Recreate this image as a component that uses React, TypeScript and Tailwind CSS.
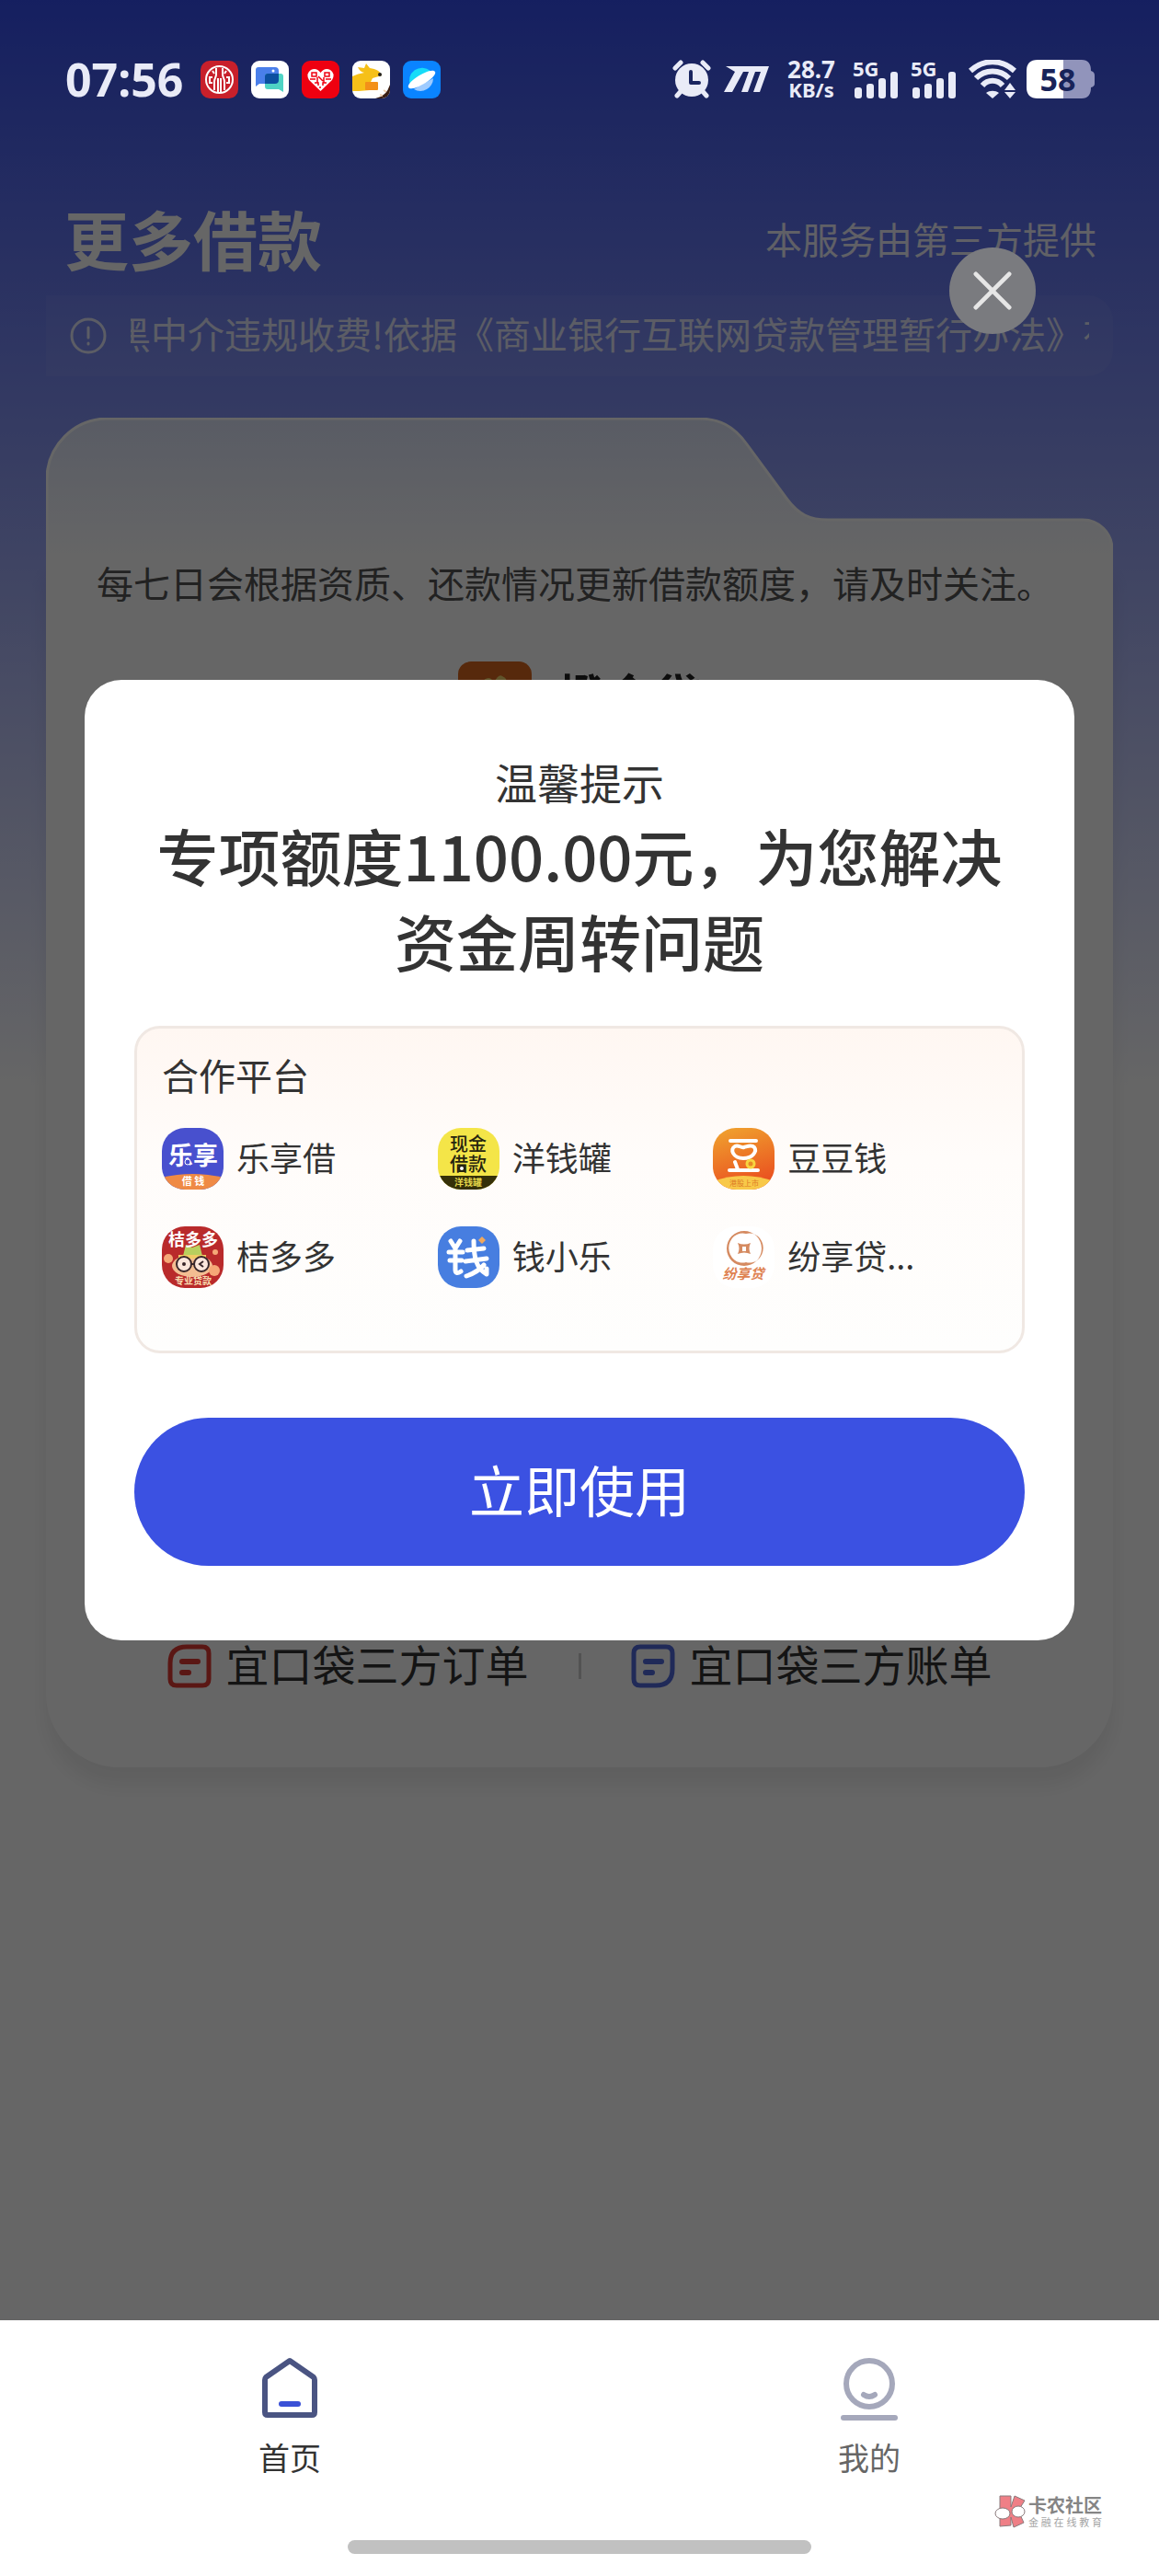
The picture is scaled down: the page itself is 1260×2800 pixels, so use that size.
import type { ReactNode } from "react"

const Alarm = () => (
    <svg viewBox="0 0 42 42" className="w-[42px] h-[42px]" aria-hidden="true">
        <g stroke="#e9ebf7" strokeWidth="5" strokeLinecap="round">
            <path d="M3 9L9 3M39 9L33 3M5 39l7-8M37 39l-7-8" />
        </g>
        <circle cx="21" cy="22" r="18" fill="#e9ebf7" />
        <path d="M20 13v12h9" fill="none" stroke="#1a2560" strokeWidth="4" strokeLinejoin="round" strokeLinecap="round" />
    </svg>
)

const CarrierMark = () => (
    <svg viewBox="0 0 50 30" className="w-[50px] h-[30px]" aria-hidden="true">
        <path d="M2 1H49L39 29H32L40 7H34L26 29H19L27 7H21L9 29H0L12 7Z" fill="#e9ebf7" />
    </svg>
)

const Signal = () => (
    <div className="relative w-[50px] h-[42px]">
        <span className="absolute left-0 top-0 text-[22px] leading-[18px] font-bold">5G</span>
        <svg viewBox="0 0 50 42" className="w-full h-full" aria-hidden="true">
            <g fill="#e9ebf7">
                <rect x="2" y="30" width="8" height="12" rx="3" />
                <rect x="15" y="26" width="8" height="16" rx="3" />
                <rect x="28" y="20" width="8" height="22" rx="3" />
                <rect x="41" y="13" width="8" height="29" rx="3" />
            </g>
        </svg>
    </div>
)

const Wifi = () => (
    <svg viewBox="0 0 52 42" className="w-[52px] h-[42px]" aria-hidden="true">
        <g fill="none" stroke="#e9ebf7" strokeWidth="6">
            <path d="M2 12C16 -1 36 -1 50 12" />
            <path d="M8 20C18 10 34 10 44 20" />
            <path d="M15 28C21 21 31 21 37 28" />
        </g>
        <path d="M19 36c4-3 10-3 14 0l-7 6z" fill="#e9ebf7" />
        <path d="M39 33l6-8 6 8zM39 35h12l-6 7z" fill="#e9ebf7" />
    </svg>
)

const Battery = () => (
    <div className="relative w-[74px] h-[42px]">
        <svg viewBox="0 0 74 42" className="w-full h-full" aria-hidden="true">
            <path d="M40 0H60Q70 0 70 12Q74 13 74 17V26Q74 29 70 30Q70 42 60 42H40Z" fill="#9194bb" />
            <path d="M12 0H40V42H12Q0 42 0 30V12Q0 0 12 0Z" fill="#fff" />
        </svg>
        <span className="absolute left-0 top-0 w-[68px] h-[42px] text-center text-[34px] leading-[42px] font-bold text-[#182359]">58</span>
    </div>
)

const trayIcons: ReactNode[] = [
    <svg key="bank" viewBox="0 0 41 41" className="w-[41px] h-[41px]">
        <rect width="41" height="41" rx="10" fill="#c8202b" />
        <circle cx="20.500" cy="20.500" r="14.500" fill="none" stroke="#fff" strokeWidth="2" />
        <path d="M17 8v7c0 3-2 4-2 8v9M24 8v7c0 3 2 4 2 8v9M19 19v15M22 19v15M13 11l2 3M28 11l-2 3" fill="none" stroke="#fff" strokeWidth="2" />
        <path d="M13 18h-3v6h3M28 18h3v6h-3" fill="none" stroke="#fff" strokeWidth="2" />
    </svg>,
    <svg key="chat" viewBox="0 0 41 41" className="w-[41px] h-[41px]">
        <rect width="41" height="41" rx="9" fill="#fff" />
        <path d="M8 7h18q4 0 4 4v14H9l-4 3V10q0-3 3-3z" fill="#4a7fea" />
        <path d="M18 14h14q3 0 3 3v17l-5-3H18q-3 0-3-3V17q0-3 3-3z" fill="#4fd3c4" />
        <path d="M18 14h12v7q0 4-4 4H15v-8q0-3 3-3z" fill="#0c4fa0" />
        <circle cx="24" cy="11" r="1.500" fill="#fff" />
    </svg>,
    <svg key="heart" viewBox="0 0 41 41" className="w-[41px] h-[41px]">
        <rect width="41" height="41" rx="9" fill="#ee0010" />
        <path d="M20.500 33L8 21q-4-7 2-11 6-3 10.500 3 4.500-6 10.500-3 6 4 2 11z" fill="#fff" />
        <path d="M11 13h5v4h-5zM25 13h5v4h-5zM9 20h6M26 20h6M14 24h4v3M23 27v-3h4M17 18v6M24 18v6M18 17l5 5M20 28v2" fill="none" stroke="#ee0010" strokeWidth="1.500" />
    </svg>,
    <svg key="kangaroo" viewBox="0 0 41 41" className="w-[41px] h-[41px]">
        <clipPath id="tray-clip">
            <rect width="41" height="41" rx="9" />
        </clipPath>
        <g clipPath="url(#tray-clip)">
            <rect width="41" height="41" fill="#fff" />
            <path d="M6 7l7 1 2-5 4 5c7 1 11 3 13 8l-10 3-2 4-4 3 3 6-12 1H0V17q6-3 13-4-5-1-7-6z" fill="#f6c019" />
            <rect x="14" y="23" width="14" height="9" rx="1" fill="#f39019" />
            <path d="M41 26v15H25q12-2 16-15z" fill="#3a1d12" />
            <path d="M30 37l3 1M34 32l3 2" stroke="#f0d0b0" strokeWidth="2" />
            <circle cx="30" cy="15" r="2" fill="#222" />
        </g>
    </svg>,
    <svg key="planet" viewBox="0 0 41 41" className="w-[41px] h-[41px]">
        <rect width="41" height="41" rx="9" fill="#0a84ff" />
        <path d="M8 27A14 14 0 0 1 30 11z" fill="#16dcf8" />
        <path d="M33 19A14 14 0 0 1 12 31z" fill="#9ecbff" />
        <path d="M6 29C3 23 31 6 35 12 38 18 10 35 6 29z" fill="#fff" />
    </svg>,
]

const PlatformTile = ({ id, children }: { id: string; children: ReactNode }) => (
    <svg viewBox="0 0 67 67" className="w-[67px] h-[67px] shrink-0" aria-hidden="true">
        <defs>
            <clipPath id={id}>
                <rect width="67" height="67" rx="25" />
            </clipPath>
            <linearGradient id={`${id}-orange`} x1="0" y1="0" x2="0.3" y2="1">
                <stop offset="0" stopColor="#f0a52f" />
                <stop offset="1" stopColor="#ea5320" />
            </linearGradient>
        </defs>
        <g clipPath={`url(#${id})`} textAnchor="middle">{children}</g>
    </svg>
)

const platforms = [
    {
        name: "乐享借",
        logo: (
            <PlatformTile id="lexiang">
                <rect width="67" height="67" fill="#4850ce" />
                <text x="34" y="40" fontSize="27" fontWeight="700" fill="#fff">乐享</text>
                <circle cx="28" cy="37" r="3" fill="#4850ce" stroke="#fff" />
                <path d="M0 54Q33 46 67 54V67H0z" fill="#ef8a45" />
                <text x="34" y="62" fontSize="11" fontWeight="700" fill="#fff">借 钱</text>
            </PlatformTile>
        ),
    },
    {
        name: "洋钱罐",
        logo: (
            <PlatformTile id="yangqianguan">
                <rect width="67" height="67" fill="#f4e548" />
                <text x="33" y="25" fontSize="20" fontWeight="500" fill="#26240f">现金</text>
                <text x="33" y="47" fontSize="20" fontWeight="500" fill="#26240f">借款</text>
                <circle cx="26" cy="44" r="3" fill="#fff" stroke="#26240f" strokeWidth="2" />
                <rect y="52" width="67" height="15" fill="#353009" />
                <text x="33" y="63" fontSize="10" fontWeight="700" fill="#e5d84b">洋钱罐</text>
            </PlatformTile>
        ),
    },
    {
        name: "豆豆钱",
        logo: (
            <PlatformTile id="doudou">
                <rect width="67" height="67" fill="url(#doudou-orange)" />
                <g fill="none" stroke="#fff" strokeWidth="4" strokeLinecap="round">
                    <path d="M19 14H47M18 46H49M24 37l3 8" />
                    <path d="M24 20c4-2 6 2 10 1s8-3 11 0c3 4-1 12-12 12S18 23 24 20z" />
                </g>
                <circle cx="41" cy="39" r="4" fill="#e98a26" stroke="#f7d53f" strokeWidth="3" />
                <path d="M0 58Q33 46 67 58V67H0z" fill="#f8c949" />
                <text x="34" y="63" fontSize="8" fill="#dd7a25">港股上市</text>
            </PlatformTile>
        ),
    },
    {
        name: "桔多多",
        logo: (
            <PlatformTile id="juduoduo">
                <rect width="67" height="67" fill="#b92a2b" />
                <ellipse cx="33" cy="43" rx="22" ry="12" fill="#f3bd92" />
                <path d="M23 32l3-12 7 3 8-3 3 12z" fill="#b9cf5e" />
                <path d="M18 31h30v4H18z" fill="#f1cb65" />
                <g fill="#f5a877">
                    <circle cx="7" cy="35" r="5" />
                    <circle cx="57" cy="48" r="6" />
                    <circle cx="58" cy="28" r="3" />
                </g>
                <g fill="#fbe6dc" stroke="#38262a" strokeWidth="2">
                    <circle cx="24" cy="41" r="8" />
                    <circle cx="43" cy="41" r="8" />
                </g>
                <path d="M32 41h3M45 38l-4 3 4 3" fill="none" stroke="#38262a" strokeWidth="2" />
                <circle cx="24" cy="41" r="2" fill="#38262a" />
                <text x="34" y="21" fontSize="18" fontWeight="700" fill="#fff">桔多多</text>
                <text x="34" y="63" fontSize="10" fontWeight="700" fill="#f8ddb0">专业贷款</text>
            </PlatformTile>
        ),
    },
    {
        name: "钱小乐",
        logo: (
            <PlatformTile id="qianxiaole">
                <rect width="67" height="67" fill="#477ee0" />
                <g fill="none" stroke="#fff" strokeWidth="5" strokeLinecap="round" strokeLinejoin="round">
                    <path d="M14 16l5 8 5-8M12 28h15M13 37h13M19 25v22q0 6 6 2" />
                    <path d="M32 26l18-2M30 38l23-3M39 16c0 18 3 30 14 36v-6M50 42Q43 50 31 54" />
                </g>
                <path d="M48 11l4 4-4 4-4-4z" fill="#f0a75c" />
            </PlatformTile>
        ),
    },
    {
        name: "纷享贷...",
        logo: (
            <PlatformTile id="fenxiang">
                <rect width="67" height="67" fill="#fff" />
                <path d="M34 5a19 19 0 1 0 0 38 19 19 0 1 0 0-38zM36 8a15 16 0 1 1 0 31 15 16 0 1 1 0-31z" fill="#d58a60" fillRule="evenodd" />
                <path d="M27 18q7 3 14 0-3 6 0 12-7-3-14 0 3-6 0-12zM32 22v5h4v-5z" fill="#d58a60" fillRule="evenodd" />
                <text x="33" y="57" fontSize="15" fontWeight="700" fontStyle="italic" fill="#de8150">纷享贷</text>
            </PlatformTile>
        ),
    },
]

const OrderIcon = ({ color, flip }: { color: string; flip?: boolean }) => (
    <svg viewBox="0 0 48 48" className="w-12 h-12 shrink-0" fill="none" stroke={color} strokeWidth="5" strokeLinecap="round" aria-hidden="true">
        {flip ? (
            <path d="M10 3H38Q45 3 45 10V27Q45 45 27 45H10Q3 45 3 38V10Q3 3 10 3z" />
        ) : (
            <path d="M21 3H38Q45 3 45 10V38Q45 45 38 45H10Q3 45 3 38V21Q3 3 21 3z" />
        )}
        <path d="M16 19H33M16 31H23" strokeWidth="6" />
    </svg>
)

const StatusBar = () => (
    <div className="absolute inset-x-0 top-0 z-20 flex items-center justify-between pt-16 pl-[71px] pr-[70px] text-[#e9ebf7] font-['Noto_Sans',sans-serif]">
        <div className="flex items-center gap-[14px]">
            <span className="mr-[5px] text-[50px] leading-[42px] font-bold">07:56</span>
            {trayIcons}
        </div>
        <div className="flex items-center">
            <Alarm />
            <div className="ml-[14px]">
                <CarrierMark />
            </div>
            <div className="ml-[18px] w-[54px] text-center font-bold">
                <div className="text-[26px] leading-[22px]">28.7</div>
                <div className="text-[22px] leading-[22px]">KB/s</div>
            </div>
            <div className="ml-[18px] flex gap-[13px]">
                <Signal />
                <Signal />
            </div>
            <div className="ml-[13px] mr-[11px]">
                <Wifi />
            </div>
            <Battery />
        </div>
    </div>
)

const LoanPage = () => (
    <div className="pt-56 px-[50px]">
        <div className="flex items-center justify-between pl-5 pr-[18px] text-white">
            <h1 className="text-[70px] leading-[70px] font-bold">更多借款</h1>
            <p className="text-[40px] leading-[60px] text-white/90">本服务由第三方提供</p>
        </div>

        {/* Scrolling notice */}
        <div className="mt-[27px] flex h-[88px] items-center rounded-r-[28px] bg-white/5 px-[26px] text-white/80">
            <svg viewBox="0 0 40 40" className="w-10 h-10 shrink-0" fill="none" stroke="currentColor" strokeWidth="3" strokeLinecap="round" aria-hidden="true">
                <circle cx="20" cy="20" r="18" />
                <path d="M20 11v11M20 28v1" />
            </svg>
            <div className="ml-[26px] flex-1 overflow-hidden pb-1.5">
                <p className="-ml-[18px] whitespace-nowrap text-[40px] leading-[60px]">
                    黑中介违规收费!依据《商业银行互联网贷款管理暂行办法》有
                </p>
            </div>
        </div>

        {/* Folder card */}
        <section className="mt-[45px]">
            <svg viewBox="0 0 1160 152" preserveAspectRatio="none" className="block w-full h-[152px]" aria-hidden="true">
                <defs>
                    <linearGradient id="folder" x1="0" y1="0" x2="0" y2="1">
                        <stop offset="0" stopColor="#dee5fb" />
                        <stop offset="1" stopColor="#ffffff" />
                    </linearGradient>
                </defs>
                <path d="M1 153V67A66 66 0 0 1 67 1H709C732 1 748 9 762 29L806 89C818 105 830 111 850 111H1127A32 32 0 0 1 1159 143V153Z" fill="url(#folder)" stroke="#fff" strokeWidth="3" />
            </svg>
            <div className="rounded-b-[80px] bg-white pb-20 shadow-[0_20px_20px_rgba(0,0,0,0.07)]">
                <p className="pl-[55px] text-[40px] leading-[54px] text-[#555]">每七日会根据资质、还款情况更新借款额度，请及时关注。</p>
                <div className="mt-[59px] flex h-20 items-center justify-center gap-7">
                    <svg viewBox="0 0 80 80" className="w-20 h-20" aria-hidden="true">
                        <rect width="80" height="80" rx="14" fill="#d9661e" />
                        <path d="M26 22q6-6 10-3l3 4q5-10 9-7 6 2 5 10l2 40H24z" fill="#f1d36b" />
                    </svg>
                    <h2 className="pb-2 text-[52px] leading-[60px] font-bold text-[#222]">橙金贷</h2>
                </div>
                <div className="mt-[982px] flex items-center justify-center text-[47px] leading-[54px] text-[#333]">
                    <a href="#orders" className="flex items-center gap-4">
                        <OrderIcon color="#e23b32" />
                        <span className="pb-1.5">宜口袋三方订单</span>
                    </a>
                    <span className="mx-[54px] h-7 w-[3px] bg-[#ccc]" />
                    <a href="#bills" className="flex items-center gap-4">
                        <OrderIcon color="#5069dc" flip />
                        <span className="pb-1.5">宜口袋三方账单</span>
                    </a>
                </div>
            </div>
        </section>
    </div>
)

const PromoDialog = () => (
    <div className="absolute inset-0 z-10 flex items-center bg-black/60 px-[92px]">
        <button aria-label="关闭" className="absolute right-[134px] top-[269px] flex h-[94px] w-[94px] items-center justify-center rounded-full bg-[#7a7b7f]">
            <svg viewBox="0 0 44 44" className="w-[42px] h-[42px]" stroke="#e6e6e6" strokeWidth="5" strokeLinecap="round" aria-hidden="true">
                <path d="M3 3L41 41M41 3L3 41" />
            </svg>
        </button>

        <div role="dialog" aria-labelledby="promo-title" className="w-full rounded-[40px] bg-white px-[54px] pt-20 pb-[81px] text-[#333]">
            <p className="text-center text-[46px] leading-[60px]">温馨提示</p>
            <h2 id="promo-title" className="mt-[3px] text-center text-[67px] leading-[93px] font-medium">
                专项额度1100.00元，为您解决资金周转问题
            </h2>

            <div className="mt-[47px] rounded-[28px] border-[3px] border-[#f0e8e3] bg-[linear-gradient(#fff7f2,#fffcfa_40%,#fefefd)] pt-5 pb-[68px] pl-[27px] pr-9">
                <h3 className="text-[40px] leading-[60px]">合作平台</h3>
                <ul className="mt-7 grid grid-cols-3 gap-y-10">
                    {platforms.map((p) => (
                        <li key={p.name} className="flex items-center gap-[14px] text-[36px] leading-[60px]">
                            {p.logo}
                            <span className="pb-1.5">{p.name}</span>
                        </li>
                    ))}
                </ul>
            </div>

            <button className="mt-[70px] h-[161px] w-full rounded-full bg-[#3b51e2] pb-2 text-[60px] text-white">立即使用</button>
        </div>
    </div>
)

const TabBar = () => (
    <nav className="relative bg-white pt-[38px] pb-6 text-[34px] leading-[50px]">
        <div className="grid grid-cols-2">
            <a href="#home" className="flex flex-col items-center gap-3 text-[#333]">
                <svg viewBox="0 0 64 74" className="w-16 h-[74px]" fill="none" strokeLinecap="round" strokeLinejoin="round" aria-hidden="true">
                    <path d="M32 6L58 24Q59 25 59 27V62Q59 65 56 65H8Q5 65 5 62V27Q5 25 6 24Z" stroke="#4a5482" strokeWidth="6" />
                    <path d="M23 53H41" stroke="#3b51d6" strokeWidth="6" />
                </svg>
                首页
            </a>
            <a href="#mine" className="flex flex-col items-center gap-3 text-[#666]">
                <svg viewBox="0 0 64 74" className="w-16 h-[74px]" fill="none" stroke="#a5a8bb" strokeWidth="6" strokeLinecap="round" aria-hidden="true">
                    <circle cx="32" cy="31" r="25" />
                    <path d="M26 43q6 4 12 0" />
                    <path d="M4 68H60" />
                </svg>
                我的
            </a>
        </div>
        <div className="mx-auto mt-[65px] h-[15px] w-2/5 rounded-full bg-[#c1c1c1]" />

        {/* Community watermark */}
        <div className="absolute right-[62px] bottom-[52px] flex items-center gap-[3px] text-[#858585]">
            <svg viewBox="0 0 34 36" className="w-[34px] h-9" aria-hidden="true">
                <path d="M6 1H18V13L22 1 33 6 26 17 32 30 21 35 18 24V33L6 34z" fill="#ef7f86" stroke="#8a7a7c" strokeWidth="1" />
                <ellipse cx="9" cy="20" rx="8" ry="6" fill="#fff" stroke="#8a7a7c" />
                <ellipse cx="26" cy="18" rx="7" ry="6" fill="#fff" stroke="#8a7a7c" />
            </svg>
            <div>
                <div className="text-[20px] leading-[22px] font-bold">卡农社区</div>
                <div className="flex justify-between text-[11px] leading-[14px] text-[#a5a5a5]">
                    {"金融在线教育".split("").map((c) => (
                        <span key={c}>{c}</span>
                    ))}
                </div>
            </div>
        </div>
    </nav>
)

export default function App() {
    return (
        <div className="flex min-h-screen flex-col bg-white font-['Noto_Sans_CJK_SC',sans-serif]">
            <main className="relative flex-1 bg-[linear-gradient(#364fef,#fff_1180px)]">
                <StatusBar />
                <LoanPage />
                <PromoDialog />
            </main>
            <TabBar />
        </div>
    )
}
